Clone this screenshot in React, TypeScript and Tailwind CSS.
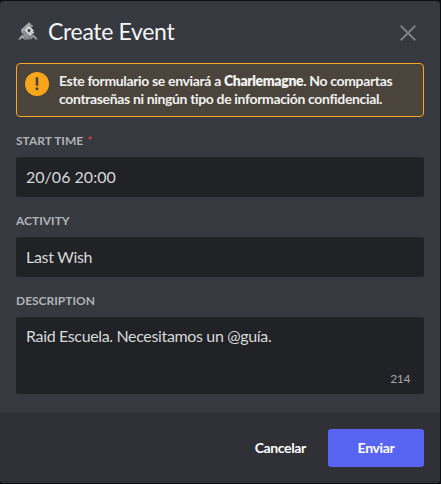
import React from "react";

function Logo() {
  return (
    <svg width="22" height="20" viewBox="0 0 22 20" className="mr-2 shrink-0">
      <path d="M0 17.5 4 12.8 6 14 9.5 17.5H6.2L4.4 15.7 2.4 17.5Z" fill="#a4a5a7" />
      <path d="M20 17.5 16 12.8 14 13.6 11.5 16 12.8 17.5 15.4 15.3 17.4 17.5Z" fill="#97989b" />
      <path d="M6 15.5h7v2H6Z" fill="#77797c" />
      <path d="M11 .4 15.3 4 13.4 5.8 11.2 4.2 6.4 9.2 11.4 14.2 10.4 16.8 7.2 15.2 3 9.8 3.6 7.2Z" fill="#929396" />
      <path d="m11 .4 1.6 1.2L5.4 8.8 3.4 9.4 3.6 7.2Z" fill="#a9aaac" />
      <path d="m11 3.8 4.8 4.8-4.8 5-4.6-5Z" fill="#dedfdf" />
      <path d="m11 6.5 2 2.1-2 2.2-2-2.2Z" fill="#45474b" />
      <path d="m15 9.2 1.4 1.4-5 4.8v-2.6Z" fill="#c5c6c7" />
    </svg>
  );
}

function Label({ children, required = false }: { children: React.ReactNode; required?: boolean }) {
  return (
    <div className="mb-2 h-4 whitespace-nowrap text-[12px] font-bold leading-4 text-[#b1b3b7]">
      {children}
      {required && <span className="ml-1 text-[#d83c3e]">*</span>}
    </div>
  );
}

function Field({ label, value, required }: { label: string; value: string; required?: boolean }) {
  return (
    <div className="mb-4">
      <Label required={required}>{label}</Label>
      <div
        className={`flex h-10 items-center rounded-[3px] bg-[#202225] px-2.5 text-base text-[#d7d9db] ${
          /\d/.test(value) ? "tracking-[0.02px]" : "tracking-[-0.3px]"
        }`}
      >
        {value}
      </div>
    </div>
  );
}

export default function App() {
  return (
    <div className="h-[484px] w-[441px] bg-[#0d0e11] pt-px pr-px pb-px font-['Lato',sans-serif]">
      <div className="flex h-full flex-col overflow-hidden rounded-[4px] bg-[#36393f]">
        <header className="flex h-[62px] shrink-0 items-center pr-6 pl-[18px]">
          <Logo />
          <h1 className="grow whitespace-nowrap pb-0.5 text-[23px] leading-7 tracking-[-0.32px] text-[#f5f5f6]">Create Event</h1>
          <svg width="16" height="16" viewBox="0 0 16 16" fill="none" stroke="#7e8083" strokeWidth="2" className="relative top-px">
            <path d="m.7.7 14.6 14.6M15.3.7.7 15.3" />
          </svg>
        </header>
        <main className="h-[350px] shrink-0 px-4">
          <div className="mb-4 flex h-[54px] rounded-[4px] border border-[#faa61a] bg-[#4a443c] pt-2 pl-2">
            <svg width="24" height="24" viewBox="0 0 24 24" className="mr-2.5 shrink-0">
              <circle cx="12" cy="12" r="12" fill="#faa61a" />
              <path d="M10.7 5.2h2.6v8.5h-2.6Z" fill="#4a443c" />
              <circle cx="12" cy="16.8" r="1.5" fill="#4a443c" />
            </svg>
            <p className="whitespace-nowrap text-sm font-bold leading-[18px] tracking-[-0.35px] text-[#f1f1f0]">
              Este formulario se enviará a <strong className="font-extrabold">Charlemagne</strong>. No compartas
              <br />
              contraseñas ni ningún tipo de información confidencial.
            </p>
          </div>
          <Field label="START TIME" value="20/06 20:00" required />
          <Field label="ACTIVITY" value="Last Wish" />
          <Label>DESCRIPTION</Label>
          <div className="flex h-[77px] flex-col justify-between rounded-[3px] bg-[#202225] px-2.5 pt-[9px] pb-[7px] text-base text-[#d7d9db]">
            <p className="leading-5 tracking-[-0.35px]">Raid Escuela. Necesitamos un @guía.</p>
            <span className="mr-1 self-end text-[12px] leading-4 tracking-[-0.4px] text-[#a3a6aa]">214</span>
          </div>
        </main>
        <footer className="flex grow items-start justify-end bg-[#2f3136] pt-4 pr-4 text-sm font-bold tracking-[-0.35px] text-white">
          <button className="mr-[22px] h-[38px]">Cancelar</button>
          <button className="h-[38px] w-24 rounded-[3px] bg-[#5865f2]">Enviar</button>
        </footer>
      </div>
    </div>
  );
}
